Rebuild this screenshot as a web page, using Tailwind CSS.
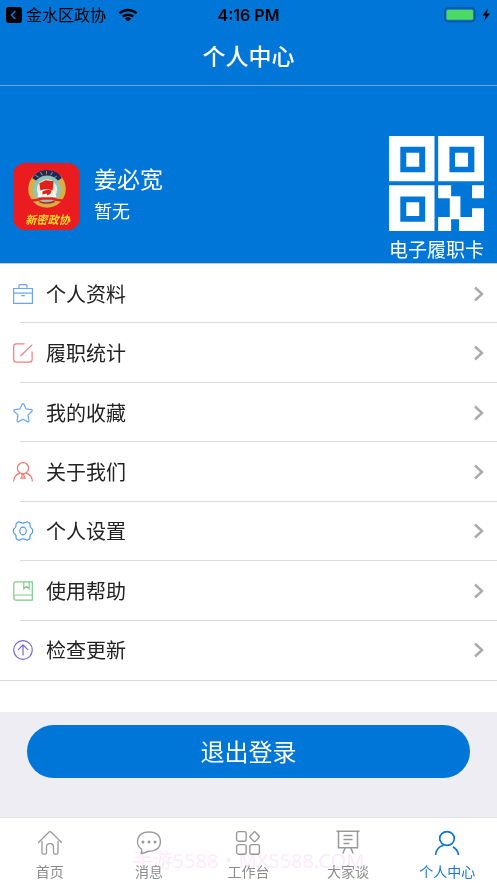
<!DOCTYPE html>
<html lang="zh-CN">
<head>
<meta charset="UTF-8" />
<meta name="viewport" content="width=device-width, initial-scale=1" />
<title>个人中心</title>
<script src="https://cdn.jsdelivr.net/npm/@tailwindcss/browser@4"></script>
</head>
<body class="relative flex min-h-screen flex-col bg-white font-['Liberation_Sans','Noto_Sans_CJK_SC',sans-serif] text-[#222]">
  <header class="border-b border-[#6fa6e2] bg-[#0077d8]">
    <!-- status bar -->
    <div class="grid h-7 grid-cols-3 items-center pr-1.5 pl-1.5 text-black">
      <div class="flex items-center">
        <svg class="size-4 shrink-0" viewBox="0 0 16 16"><rect width="16" height="16" rx="3" /><path d="M9.5 4 5.500 8l4 4" fill="none" stroke="#0077d8" stroke-width="1.600" /></svg>
        <span class="ml-1 pt-0.5 text-base leading-7 whitespace-nowrap">金水区政协</span>
        <svg class="ml-3 h-3.5 w-5 shrink-0" viewBox="0 0 20 14" fill="none" stroke="#000" stroke-width="2.400"><path d="M1.500 5.300a12.500 12.500 0 0 1 17 0M4.700 8.700a8 8 0 0 1 10.600 0" /><path d="M10 13.400 6.800 10.600a4.600 4.600 0 0 1 6.400 0z" fill="#000" stroke="none" /></svg>
      </div>
      <span class="text-center font-['Inter',sans-serif] text-base font-semibold">4:16 PM</span>
      <div class="flex items-center justify-end">
        <svg class="h-4 w-12" viewBox="0 0 48 16"><rect x="1.800" y="1" width="30" height="13.500" rx="3.500" fill="none" stroke="#07509a" stroke-width="1.500" /><rect x="3.500" y="2.700" width="26.600" height="10.100" rx="1.500" fill="#4cd964" /><path d="M34 5.800q1.800 2 0 4z" fill="#07509a" /><path d="M45 1.500 39.500 8.500h3.200L41.300 13.700 47 6.500h-3.300z" /></svg>
      </div>
    </div>
    <h1 class="h-[57px] text-center text-[23px] leading-[58px] font-medium text-white">个人中心</h1>
  </header>

  <section class="flex h-[178px] items-end justify-between border-b border-[#b9c9e4] bg-[#0077d8] pr-[13px] pl-[13px] text-white">
    <div class="mb-8 flex items-center gap-3.5 pb-px">
      <svg class="size-[67px]" viewBox="0 0 66 66">
        <rect width="66" height="66" rx="12" fill="#ea1c1f" />
        <circle cx="33.500" cy="25.500" r="18.500" fill="#d9ae43" />
        <path d="M19 15q3-5 8-7 6-2 13 0 6 2 8 7l-5 3q-9-7-19 0z" fill="#1b2a63" />
        <path d="m22 12 3 2m2-5 2 3m4-4v3m6-2-2 3m6 1-3 2" stroke="#a98a3f" />
        <circle cx="33.500" cy="26" r="13.700" fill="#8fc4ba" />
        <circle cx="33.500" cy="26" r="10" fill="#f1eed3" />
        <path d="m26 20 6-3 8 1-1 9q-6-3-12 0z" fill="#e2201f" />
        <path d="M24 33q1-7 9-7 8 0 10 7-9 4-19 0z" fill="#fff9e9" />
        <path d="m29 28 5-2 4 1-1 3-3 2-1-2-4 1z" fill="#e2201f" />
        <path d="M14 37q10 0 14-2h11q4 2 14 2" fill="none" stroke="#ea1c1f" stroke-width="2.500" />
        <path d="M26 38q7 3 15 0" fill="none" stroke="#b52a1c" stroke-width="1.500" />
        <text x="34" y="60" text-anchor="middle" fill="#ffdf24" font-size="11" font-weight="bold" font-style="italic" font-family="Noto Sans CJK SC, sans-serif">新密政协</text>
      </svg>
      <div class="pb-1">
        <p class="text-[23px] leading-9">姜必宽</p>
        <p class="text-lg leading-7">暂无</p>
      </div>
    </div>
    <button type="button" class="flex flex-col items-center">
      <svg class="h-[95px] w-[95px]" viewBox="35 33 286 284" preserveAspectRatio="none">
        <path fill="#fff" d="M35 33h137v135H35zM183 33h138v135H183zM35 180h137v137H35zM183 180h39v39h-39zM285 180h36v39h-36zM218 213h32v69h-32zM183 275h39v42h-39zM246 275h39v42h-39zM285 249h36v68h-36z" />
        <path fill="#0077d8" d="M69 65h75v76H69zM217 65h75v76h-75zM69 214h75v75H69z" />
        <path fill="#fff" d="M87 83h39v42H87zM234 83h39v42h-39zM87 231h39v41H87z" />
      </svg>
      <span class="h-8 text-[19px] leading-10">电子履职卡</span>
    </button>
  </section>

  <nav class="grid flex-1 auto-rows-fr border-b border-[#d9d9d9] text-xl">
    <a href="#" class="relative flex items-center gap-3 pr-3 pl-3">
      <svg class="size-[22px]" viewBox="0 0 22 22" fill="none" stroke="#69a5fb" stroke-width="1.200"><path d="M1.600 5.500h18.800v14.900H1.600zM1.600 10.200h18.800M7 5V2.800Q7 1.600 8.200 1.600h5.600q1.200 0 1.200 1.200V5M9.200 12.700h3.600" /></svg>
      <span class="flex-1 pt-0.5">个人资料</span>
      <svg class="h-4 w-3" viewBox="0 0 12 16" fill="none" stroke="#aaa" stroke-width="2.400"><path d="m2 1.500 7 6.500-7 6.500" /></svg>
      <span class="absolute right-0 bottom-0 left-5 h-px bg-[#dcdcdc]"></span>
    </a>
    <a href="#" class="relative flex items-center gap-3 pr-3 pl-3">
      <svg class="size-[22px]" viewBox="0 0 22 22" fill="none" stroke="#fa7b7b" stroke-width="1.200"><path d="M12.500 1.800H4.300Q1.700 1.800 1.700 4.400v13.200q0 2.600 2.600 2.600h13.200q2.600 0 2.600-2.600V9.500M8.500 14 20.300 2.600" /></svg>
      <span class="flex-1 pt-0.5">履职统计</span>
      <svg class="h-4 w-3" viewBox="0 0 12 16" fill="none" stroke="#aaa" stroke-width="2.400"><path d="m2 1.500 7 6.500-7 6.500" /></svg>
      <span class="absolute right-0 bottom-0 left-5 h-px bg-[#dcdcdc]"></span>
    </a>
    <a href="#" class="relative flex items-center gap-3 pr-3 pl-3">
      <svg class="size-[22px]" viewBox="0 0 22 22" fill="none" stroke="#69a5fb" stroke-width="1.200" stroke-linejoin="round"><path d="M10 2.400q1-1.800 2 0l2.100 4.500 5.100.7q2 .4.500 1.900L16 13.200l.9 5.200q.2 2-1.600 1.200L11 17.300l-4.300 2.300q-1.800.8-1.600-1.200l.9-5.200-3.700-3.700Q.8 8 2.800 7.600l5.100-.7z" /></svg>
      <span class="flex-1 pt-0.5">我的收藏</span>
      <svg class="h-4 w-3" viewBox="0 0 12 16" fill="none" stroke="#aaa" stroke-width="2.400"><path d="m2 1.500 7 6.500-7 6.500" /></svg>
      <span class="absolute right-0 bottom-0 left-5 h-px bg-[#dcdcdc]"></span>
    </a>
    <a href="#" class="relative flex items-center gap-3 pr-3 pl-3">
      <svg class="size-[22px]" viewBox="0 0 22 22" fill="none" stroke="#fa7171" stroke-width="1.200"><circle cx="11" cy="7.200" r="5.600" /><path d="M1.600 20.500q.2-6.500 6.500-8.400M20.400 20.500q-.2-6.500-6.500-8.400M9.800 12.900h2.400l-.5 1.500 1.300 2.800H9l1.300-2.800z" /></svg>
      <span class="flex-1 pt-0.5">关于我们</span>
      <svg class="h-4 w-3" viewBox="0 0 12 16" fill="none" stroke="#aaa" stroke-width="2.400"><path d="m2 1.500 7 6.500-7 6.500" /></svg>
      <span class="absolute right-0 bottom-0 left-5 h-px bg-[#dcdcdc]"></span>
    </a>
    <a href="#" class="relative flex items-center gap-3 pr-3 pl-3">
      <svg class="size-[22px]" viewBox="0 0 22 22" fill="none" stroke="#4e98fa" stroke-width="1.200" stroke-linejoin="round"><path d="M6.300 2Q7.200 1.500 8.200 2.200q2.800 1.800 5.600 0 1-.7 1.900-.2l1.500.9q.8.500.7 1.500-.2 2.900 2 4.300.8.500.8 2.300t-.8 2.300q-2.200 1.400-2 4.300.1 1-.7 1.500l-1.500.9q-.9.500-1.900-.2-2.800-1.800-5.600 0-1 .7-1.900.2l-1.500-.9q-.8-.5-.7-1.500.2-2.900-2-4.300-.8-.5-.8-2.300t.8-2.300q2.200-1.400 2-4.300-.1-1 .7-1.500z" /><ellipse cx="11" cy="11" rx="3.200" ry="3.800" /></svg>
      <span class="flex-1 pt-0.5">个人设置</span>
      <svg class="h-4 w-3" viewBox="0 0 12 16" fill="none" stroke="#aaa" stroke-width="2.400"><path d="m2 1.500 7 6.500-7 6.500" /></svg>
      <span class="absolute right-0 bottom-0 left-5 h-px bg-[#dcdcdc]"></span>
    </a>
    <a href="#" class="relative flex items-center gap-3 pr-3 pl-3">
      <svg class="size-[22px]" viewBox="0 0 22 22" fill="none" stroke="#82c98c" stroke-width="1.200"><path d="M3.800 1.800h16.500v18.400H3.800q-2 0-2-2V3.800q0-2 2-2zM1.800 17q.2-2 2-2h16.500M11.800 1.800v7l2.700-2.500 2.700 2.500v-7" /></svg>
      <span class="flex-1 pt-0.5">使用帮助</span>
      <svg class="h-4 w-3" viewBox="0 0 12 16" fill="none" stroke="#aaa" stroke-width="2.400"><path d="m2 1.500 7 6.500-7 6.500" /></svg>
      <span class="absolute right-0 bottom-0 left-5 h-px bg-[#dcdcdc]"></span>
    </a>
    <a href="#" class="relative flex items-center gap-3 pr-3 pl-3">
      <svg class="size-[22px]" viewBox="0 0 22 22" fill="none" stroke="#7868d0" stroke-width="1.200"><circle cx="11" cy="11" r="9.300" /><path d="M11 16.500V6M6 10.800l5-5 5 5" /></svg>
      <span class="flex-1 pt-0.5">检查更新</span>
      <svg class="h-4 w-3" viewBox="0 0 12 16" fill="none" stroke="#aaa" stroke-width="2.400"><path d="m2 1.500 7 6.500-7 6.500" /></svg>
    </a>
  </nav>

  <div class="mt-[31px] bg-[#eeedf4] px-[27px] pt-[13px] pb-[39px]">
    <button type="button" class="h-[53px] w-full rounded-full bg-[#0077d8] pt-0.5 text-2xl text-white">退出登录</button>
  </div>

  <footer class="grid h-[66px] grid-cols-5 border-t border-[#e2e1e7] bg-white pt-3 text-sm leading-8 text-[#8c8c8c]">
    <a href="#" class="flex flex-col items-center">
      <svg class="size-[26px]" viewBox="0 0 26 26" fill="none" stroke="#999" stroke-width="1.300" stroke-linejoin="round" stroke-linecap="round"><path d="M1.500 12.500 12 2q1-.8 2 0l10.500 10.500M5 11.500v11q0 1.600 1.600 1.600H8q1.500 0 1.500-1.600v-5.500q0-3.400 3.500-3.400t3.500 3.400v5.500q0 1.600 1.500 1.600h1.400q1.600 0 1.600-1.600v-11" /></svg>
      首页
    </a>
    <a href="#" class="flex flex-col items-center">
      <svg class="size-[26px]" viewBox="0 0 26 26" fill="none" stroke="#999" stroke-width="1.300" stroke-linejoin="round"><path d="M5.600 19.300Q1.500 16.500 1.500 11.800 1.800 2.200 13 1.800q11.300.4 11.500 10-.4 9.600-12.500 9.600-3.200 1.900-6.800 2.200.8-2 .4-4.300z" /><g fill="#999" stroke="none"><circle cx="7" cy="12" r="1.500" /><circle cx="13" cy="12" r="1.500" /><circle cx="19" cy="12" r="1.500" /></g></svg>
      消息
    </a>
    <a href="#" class="flex flex-col items-center">
      <svg class="size-[26px]" viewBox="0 0 26 26" fill="none" stroke="#999" stroke-width="1.400" stroke-linejoin="round"><rect x="1.600" y="1.600" width="9.600" height="9.600" rx="2" /><rect x="1.600" y="14.600" width="9.600" height="9.600" rx="2" /><rect x="14.800" y="14.600" width="9.600" height="9.600" rx="2" /><path d="M18.800 2.200q.8-.8 1.600 0l3.600 3.700q.8.800 0 1.600l-3.600 3.700q-.8.800-1.600 0l-3.600-3.700q-.8-.8 0-1.600z" /></svg>
      工作台
    </a>
    <a href="#" class="flex flex-col items-center">
      <svg class="size-[26px]" viewBox="0 0 26 26" fill="none" stroke="#999" stroke-width="1.500"><path d="M1.500 1.200h23M3.500 1.200v16.500h19V1.200M8.500 5.400h9M8.500 9.400h9M8.500 13.400h6M10.300 17.700l-2.500 5.800M15.700 17.700l2.500 5.800" /></svg>
      大家谈
    </a>
    <a href="#" class="flex flex-col items-center text-[#1778e6]">
      <svg class="size-[26px]" viewBox="0 0 26 26" fill="none" stroke="#0b75d7" stroke-width="1.700"><ellipse cx="13" cy="8.500" rx="7.300" ry="6.900" /><path d="M1.500 25q.6-7.500 8-9.800M24.500 25q-.7-5.500-5.600-8.300" /></svg>
      个人中心
    </a>
  </footer>
  <p class="pointer-events-none absolute inset-x-0 bottom-2 text-center font-['Noto_Sans','Noto_Sans_CJK_SC',sans-serif] text-xl text-[#fdeafa] mix-blend-multiply">手游5588・MX5588.COM</p>
</body>
</html>
